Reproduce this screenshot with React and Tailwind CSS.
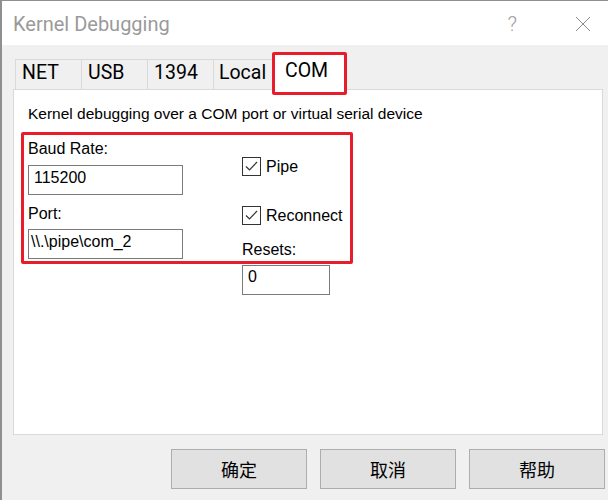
export default function App() {
  const tabs = [
    { label: 'NET', w: 'w-[66px]', pl: 'pl-[6px]' },
    { label: 'USB', w: 'w-[66px]', pl: 'pl-[6px]' },
    { label: '1394', w: 'w-[66px]', pl: 'pl-[6px]' },
    { label: 'Local', w: 'w-[59px]', pl: 'pl-[5px]' },
  ];

  return (
    <div
      className="relative w-[608px] h-[500px] overflow-hidden bg-[#f0f0f0] border-l-2 border-t border-[#8f8f8f] text-black"
      style={{ fontFamily: '"Liberation Sans", Arial, sans-serif' }}
    >
      {/* ===== Title bar ===== */}
      <div className="h-[44px] bg-white flex items-start">
        <div
          className="ml-[11px] pt-[11px] text-[20px] leading-[24px] text-[#9a9a9a]"
          style={{ fontFamily: 'Roboto, sans-serif' }}
        >
          Kernel Debugging
        </div>
        <div className="flex-1" />
        <div
          className="pt-[11px] text-[21px] leading-[24px] text-[#a0a0a0] mr-[58px]"
          style={{ fontFamily: 'Roboto, sans-serif', fontWeight: 300 }}
        >
          ?
        </div>
        <svg width="16" height="16" viewBox="0 0 16 16" className="mt-[15px] mr-[17px]">
          <path d="M1 1 L15 15 M15 1 L1 15" stroke="#8a8a8a" strokeWidth="1" fill="none" />
        </svg>
      </div>

      {/* ===== Tabs ===== */}
      <div
        className="h-[44px] flex items-end ml-[13px] text-[19.5px]"
        style={{ fontFamily: 'Roboto, sans-serif' }}
      >
        {tabs.map((t) => (
          <div
            key={t.label}
            className={`${t.w} ${t.pl} h-[30px] pt-[2px] leading-[22px] border-l border-t border-[#d9d9d9] bg-[#f0f0f0]`}
          >
            {t.label}
          </div>
        ))}
        <div className="relative z-10 w-[73px] h-[37px] -mb-px pl-[12px] pt-[6px] leading-[22px] bg-white border-x border-t border-[#d9d9d9]">
          COM
        </div>
      </div>

      {/* ===== Panel ===== */}
      <div className="ml-[11px] mr-[5px] h-[346px] bg-white border border-[#d9d9d9] px-[14px] pt-[15px]">
        <div className="text-[15.5px] leading-[18px]">
          Kernel debugging over a COM port or virtual serial device
        </div>

        <div className="flex text-[16px] leading-[18px]">
          {/* Left column */}
          <div className="w-[155px] mt-[17px]">
            <div>Baud Rate:</div>
            <div className="mt-[7px] h-[30px] border border-[#7a7a7a] pl-[5px] pt-[3px]">115200</div>
            <div className="mt-[10px]">Port:</div>
            <div className="mt-[6px] h-[30px] border border-[#7a7a7a] pl-[2px] pt-[3px]">\\.\pipe\com_2</div>
          </div>

          {/* Right column */}
          <div className="ml-[59px]">
            <div className="mt-[34px] h-[19px] flex items-center">
              <CheckBox />
              <span className="ml-[5px]">Pipe</span>
            </div>
            <div className="mt-[30px] h-[19px] flex items-center">
              <CheckBox />
              <span className="ml-[5px]">Reconnect</span>
            </div>
            <div className="mt-[16px]">Resets:</div>
            <div className="mt-[6px] w-[88px] h-[30px] border border-[#7a7a7a] pl-[5px] pt-[2px]">0</div>
          </div>
        </div>
      </div>

      {/* ===== Buttons ===== */}
      <div
        className="mt-[14px] mr-[3px] flex justify-end gap-[13px] text-[18px]"
        style={{ fontFamily: '"Noto Sans CJK SC", sans-serif' }}
      >
        <button className="w-[136px] h-[40px] bg-[#e1e1e1] border border-[#adadad] leading-none">确定</button>
        <button className="w-[136px] h-[40px] bg-[#e1e1e1] border border-[#adadad] leading-none">取消</button>
        <button className="w-[136px] h-[40px] bg-[#e1e1e1] border border-[#adadad] leading-none">帮助</button>
      </div>

      {/* ===== Red annotation boxes ===== */}
      <div className="absolute left-[270px] top-[51px] w-[75px] h-[43px] border-[3px] border-[#e81c2a] rounded-[2px] z-20" />
      <div className="absolute left-[19px] top-[131px] w-[332px] h-[132px] border-[3px] border-[#e81c2a] rounded-[2px] z-20" />
    </div>
  );
}

function CheckBox() {
  return (
    <svg width="19" height="19" viewBox="0 0 19 19">
      <rect x="0.5" y="0.5" width="18" height="18" fill="white" stroke="#333333" strokeWidth="1" />
      <path d="M4 9.5 L7.5 13 L15 5" stroke="#333333" strokeWidth="1.2" fill="none" />
    </svg>
  );
}
